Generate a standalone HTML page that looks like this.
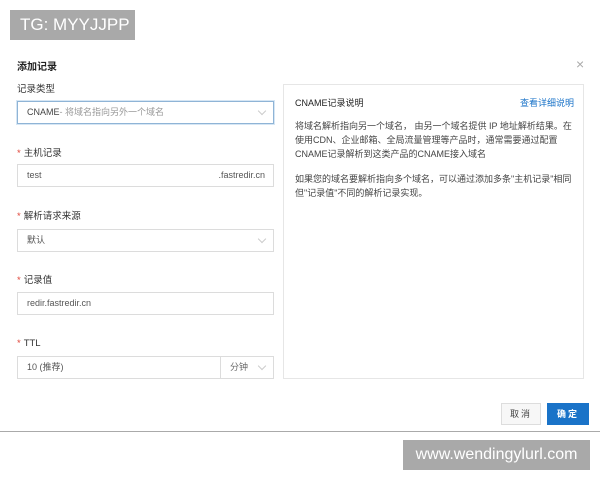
<!DOCTYPE html>
<html><head><meta charset="utf-8"><style>
*{margin:0;padding:0;box-sizing:border-box}
body{width:600px;height:480px;background:#fff;position:relative;overflow:hidden;font-family:"Liberation Sans","Noto Sans CJK SC",sans-serif;color:#333;font-size:9px}
.a{position:absolute;white-space:nowrap}
.box{position:absolute;border:1px solid #dcdcdc;background:#fff;height:23px;line-height:21px;padding-left:9px;color:#555}
.lbl{position:absolute;left:17px;font-size:9.5px;color:#333;line-height:12px}
.lbl b{color:#e0463a;font-weight:normal;margin-right:3px}
.chev{position:absolute;width:6px;height:6px;border-right:1px solid #ccc;border-bottom:1px solid #ccc;transform:rotate(45deg)}
</style></head><body>
<div class="a" style="left:10px;top:10px;width:125px;height:30px;background:#a9a9a9;color:#fff;font-size:17px;line-height:30px;padding-left:10px">TG: MYYJJPP</div>
<div class="a" style="left:17px;top:58px;font-size:10px;font-weight:bold;color:#222">添加记录</div>
<div class="a" style="left:576px;top:56px;font-size:14px;color:#aaa">×</div>

<div class="lbl" style="top:84px">记录类型</div>
<div class="box" style="left:17px;top:101px;width:257px;border-color:#8fb4d6;box-shadow:0 0 0 1px #d6e6f4"><span style="color:#444">CNAME</span><span style="color:#999">- 将域名指向另外一个域名</span></div>
<div class="chev" style="left:259px;top:108px"></div>

<div class="lbl" style="top:148px"><b>*</b>主机记录</div>
<div class="box" style="left:17px;top:164px;width:257px">test<span style="position:absolute;right:8px;color:#555">.fastredir.cn</span></div>

<div class="lbl" style="top:211px"><b>*</b>解析请求来源</div>
<div class="box" style="left:17px;top:229px;width:257px">默认</div>
<div class="chev" style="left:259px;top:236px"></div>

<div class="lbl" style="top:275px"><b>*</b>记录值</div>
<div class="box" style="left:17px;top:292px;width:257px">redir.fastredir.cn</div>

<div class="lbl" style="top:338px"><b>*</b>TTL</div>
<div class="box" style="left:17px;top:356px;width:205px">10 (推荐)</div>
<div class="box" style="left:220px;top:356px;width:54px;color:#666">分钟</div>
<div class="chev" style="left:259px;top:363px"></div>

<div class="a" style="left:283px;top:84px;width:301px;height:295px;border:1px solid #e6e6e6"></div>
<div class="a" style="left:295px;top:96px;font-size:9px;color:#222">CNAME记录说明</div>
<div class="a" style="left:520px;top:96px;font-size:9px;color:#1a73c8">查看详细说明</div>
<div class="a" style="left:295px;top:119px;font-size:9px;line-height:14px;color:#444;white-space:normal;width:280px">将域名解析指向另一个域名， 由另一个域名提供 IP 地址解析结果。在使用CDN、企业邮箱、全局流量管理等产品时，通常需要通过配置CNAME记录解析到这类产品的CNAME接入域名</div>
<div class="a" style="left:295px;top:172px;font-size:9px;line-height:14px;color:#444;white-space:normal;width:280px">如果您的域名要解析指向多个域名，可以通过添加多条"主机记录"相同但"记录值"不同的解析记录实现。</div>

<div class="a" style="left:501px;top:403px;width:40px;height:22px;border:1px solid #ddd;background:#f7f7f7;text-align:center;line-height:20px;color:#444;letter-spacing:2px">取消</div>
<div class="a" style="left:547px;top:403px;width:42px;height:22px;background:#1a73c8;text-align:center;line-height:22px;color:#fff;font-weight:bold;letter-spacing:2px">确定</div>

<div class="a" style="left:0;top:431px;width:600px;height:1px;background:#aaa"></div>
<div class="a" style="left:403px;top:440px;width:187px;height:30px;background:#a9a9a9;color:#fff;font-size:16px;line-height:30px;text-align:center">www.wendingylurl.com</div>
</body></html>
